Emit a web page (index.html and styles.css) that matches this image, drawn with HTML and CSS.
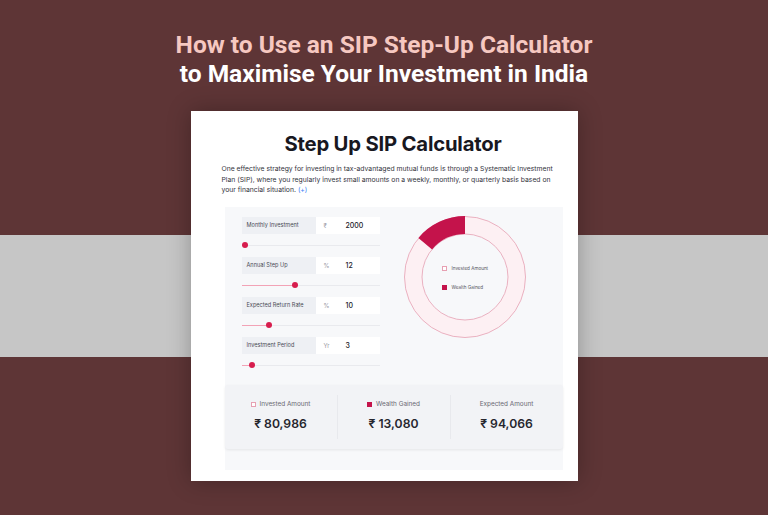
FILE: index.html
```html
<!DOCTYPE html>
<html>
<head>
<meta charset="utf-8">
<link rel="stylesheet" href="styles.css">
</head>
<body>
<header class="hero">
  <div class="hero-l1">How to Use an SIP Step-Up Calculator</div>
  <div class="hero-l2">to Maximise Your Investment in India</div>
</header>
<main class="card">
  <h1 class="card-title">Step Up SIP Calculator</h1>
  <p class="card-text">One effective strategy for investing in tax-advantaged mutual funds is through a Systematic Investment Plan (SIP), where you regularly invest small amounts on a weekly, monthly, or quarterly basis based on your financial situation.<span class="more">(+)</span></p>
  <section class="panel">
    <div class="panel-top">
      <div class="inputs">
        <div class="group">
          <div class="field"><span class="f-label">Monthly Investment</span><span class="f-val"><span class="unit">₹</span><span class="num">2000</span></span></div>
          <div class="slider"><div class="track"><div class="fill" style="width:3px"></div><div class="thumb"></div></div></div>
        </div>
        <div class="group">
          <div class="field"><span class="f-label">Annual Step Up</span><span class="f-val"><span class="unit">%</span><span class="num">12</span></span></div>
          <div class="slider"><div class="track"><div class="fill" style="width:53px"></div><div class="thumb"></div></div></div>
        </div>
        <div class="group">
          <div class="field"><span class="f-label">Expected Return Rate</span><span class="f-val"><span class="unit">%</span><span class="num">10</span></span></div>
          <div class="slider"><div class="track"><div class="fill" style="width:27px"></div><div class="thumb"></div></div></div>
        </div>
        <div class="group">
          <div class="field"><span class="f-label">Investment Period</span><span class="f-val"><span class="unit">Yr</span><span class="num">3</span></span></div>
          <div class="slider"><div class="track"><div class="fill" style="width:10px"></div><div class="thumb"></div></div></div>
        </div>
      </div>
      <div class="chart">
        <svg class="donut" width="124" height="124" viewBox="-62 -62 124 124">
          <circle cx="0" cy="0" r="51.75" fill="none" stroke="#fdf0f3" stroke-width="17.5"/>
          <circle cx="0" cy="0" r="60.5" fill="none" stroke="#e8a9ba" stroke-width="0.9"/>
          <circle cx="0" cy="0" r="43" fill="none" stroke="#e8a9ba" stroke-width="0.9"/>
          <path d="M0,-60.9 A60.9,60.9 0 0 0 -46.6,-39.1 L-32.9,-27.6 A43,43 0 0 1 0,-43 Z" fill="#c4134b"/>
        </svg>
        <div class="legend">
          <div class="lg-item"><span class="sq sq-inv"></span>Invested Amount</div>
          <div class="lg-item"><span class="sq sq-wg"></span>Wealth Gained</div>
        </div>
      </div>
    </div>
    <div class="summary">
      <div class="sum-col">
        <div class="sum-label"><span class="sq sq-inv"></span>Invested Amount</div>
        <div class="sum-val">₹ 80,986</div>
      </div>
      <div class="sum-col">
        <div class="sum-label"><span class="sq sq-wg"></span>Wealth Gained</div>
        <div class="sum-val">₹ 13,080</div>
      </div>
      <div class="sum-col">
        <div class="sum-label">Expected Amount</div>
        <div class="sum-val">₹ 94,066</div>
      </div>
    </div>
  </section>
</main>
</body>
</html>
```
FILE: styles.css
```css
html, body {
  margin: 0;
  padding: 0;
}
body {
  width: 768px;
  height: 515px;
  overflow: hidden;
  background: linear-gradient(to bottom, #5e3536 0, #5e3536 235px, #c6c6c6 235px, #c6c6c6 357px, #5e3536 357px);
  font-family: Inter, "Noto Sans", sans-serif;
}
.hero {
  padding-top: 30px;
  text-align: center;
  font-family: Roboto, "Liberation Sans", sans-serif;
  font-weight: 700;
  font-size: 24.5px;
  line-height: 29px;
}
.hero-l1 { color: #f6c8c1; }
.hero-l2 { color: #ffffff; }

.card {
  box-sizing: border-box;
  width: 387px;
  height: 370px;
  margin: 23px auto 0;
  background: #ffffff;
  box-shadow: 0 0 22px rgba(0, 0, 0, 0.28);
  padding-top: 20px;
  display: flex;
  flex-direction: column;
}
.card-title {
  margin: 0;
  padding-left: 18px;
  text-align: center;
  font-size: 20.3px;
  line-height: 26px;
  font-weight: 700;
  color: #18181f;
  letter-spacing: -0.2px;
}
.card-text {
  margin: 7px 24px 0 31px;
  font-size: 6.8px;
  line-height: 10.6px;
  color: #33333c;
}
.more {
  display: inline-block;
  margin-left: 2px;
  line-height: 8px;
  color: #3b82f6;
}

.panel {
  margin: 11px 0 0 34px;
  width: 338px;
  height: 263px;
  background: #f7f8fa;
  display: flex;
  flex-direction: column;
}
.panel-top {
  display: flex;
  padding: 10px 0 0 17px;
  height: 168px;
}
.inputs {
  width: 138px;
  display: flex;
  flex-direction: column;
}
.group {
  display: flex;
  flex-direction: column;
}
.field {
  display: flex;
  height: 17px;
  font-size: 5.6px;
}
.f-label {
  width: 74px;
  box-sizing: border-box;
  padding-left: 5px;
  background: #eef0f4;
  color: #4a4a55;
  display: flex;
  align-items: center;
}
.f-val {
  flex: 1;
  background: #ffffff;
  display: flex;
  align-items: center;
  padding-left: 8px;
}
.unit {
  width: 22px;
  color: #9a9aa4;
  font-size: 6px;
}
.num {
  color: #22222a;
  font-size: 7px;
  font-weight: 500;
}
.slider {
  height: 23px;
  display: flex;
  align-items: center;
}
.track {
  position: relative;
  width: 100%;
  height: 1px;
  background: #e9eaee;
  display: flex;
}
.fill {
  height: 1px;
  background: #f2a3b6;
}
.thumb {
  width: 6px;
  height: 6px;
  border-radius: 50%;
  background: #d71d4e;
  margin-top: -2.5px;
  margin-left: -3px;
}
.chart {
  position: relative;
  margin-left: 23px;
  margin-top: -2px;
  width: 124px;
  height: 124px;
}
.donut { display: block; }
.legend {
  position: absolute;
  left: 39px;
  top: 51px;
  display: flex;
  flex-direction: column;
  gap: 14px;
  font-size: 4.6px;
  color: #555560;
}
.lg-item {
  display: flex;
  align-items: center;
  gap: 5px;
}
.sq {
  display: inline-block;
  width: 5px;
  height: 5px;
  box-sizing: border-box;
}
.sq-inv { border: 0.8px solid #e7a0b2; background: #fff; }
.sq-wg { background: #c4134b; }

.summary {
  height: 64px;
  background: #f2f3f6;
  border-radius: 3px;
  box-shadow: 0 1px 3px rgba(0, 0, 0, 0.08);
  display: flex;
  align-items: center;
}
.sum-col {
  flex: 1;
  display: flex;
  flex-direction: column;
  align-items: center;
  gap: 8px;
  padding: 0 0 2px;
  border-left: 1px solid #e8e9ed;
  height: 42px;
  justify-content: center;
}
.sum-col:first-child { border-left: none; }
.sum-label {
  display: flex;
  align-items: center;
  gap: 4px;
  font-size: 6.4px;
  color: #6a6a74;
}
.sum-val {
  font-size: 12.2px;
  font-weight: 600;
  color: #26262e;
}
```
